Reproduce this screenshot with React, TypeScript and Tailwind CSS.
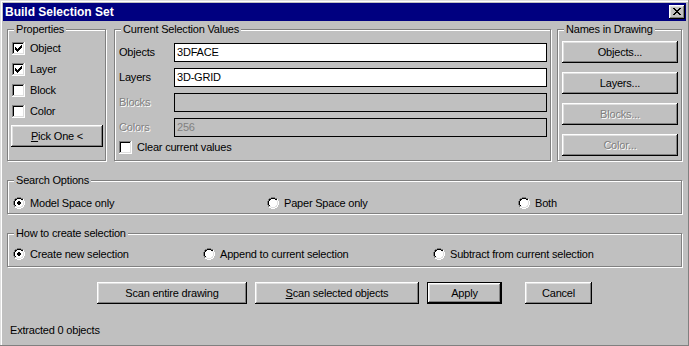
import type { ReactNode } from 'react';

// classic win95 dialog look
const font = "font-['Liberation_Sans',Arial,sans-serif]";
const raised =
  'shadow-[inset_-1px_-1px_0_#000,inset_1px_1px_0_#fff,inset_-2px_-2px_0_#808080,inset_2px_2px_0_#dfdfdf]';
const dim = 'text-[#808080] [text-shadow:1px_1px_0_#fff]';

const closeGlyph = ['##....##', '.##..##.', '..####..', '...##...', '..####..', '.##..##.', '##....##'];
const checkMark = ['......#', '.....##', '#...###', '##.###.', '#####..', '.###...', '..#....'];

const radioBase = [
  '....GGGG....',
  '..GGKKKKGG..',
  '.GKKwwwwKKW.',
  '.GKwwwwwwLW.',
  'GKwwwwwwwwLW',
  'GKwwwwwwwwLW',
  'GKwwwwwwwwLW',
  'GKwwwwwwwwLW',
  '.GKwwwwwwLW.',
  '.GLLwwwwLLW.',
  '..WWLLLLWW..',
  '....WWWW....',
];
const dot = ['.##.', '####', '####', '.##.'];

const palette: Record<string, string> = {
  G: '#808080',
  K: '#000000',
  L: '#dfdfdf',
  W: '#ffffff',
  w: '#ffffff',
  '#': '#000000',
};

function Pixels({ rows }: { rows: string[] }) {
  const w = rows[0].length;
  const h = rows.length;
  return (
    <svg width={w} height={h} viewBox={`0 0 ${w} ${h}`} shapeRendering="crispEdges" className="block shrink-0">
      {rows.flatMap((row, y) =>
        row.split('').map((c, x) =>
          palette[c] ? <rect key={`${x}-${y}`} x={x} y={y} width={1} height={1} fill={palette[c]} /> : null
        )
      )}
    </svg>
  );
}

function CheckBox({ checked }: { checked?: boolean }) {
  const rows: string[] = [];
  for (let y = 0; y < 13; y++) {
    let r = '';
    for (let x = 0; x < 13; x++) {
      let c = 'w';
      if (y === 12 || x === 12) c = 'W';
      else if (y === 0 || x === 0) c = 'G';
      else if (y === 11 || x === 11) c = 'L';
      else if (y === 1 || x === 1) c = 'K';
      else if (checked && y >= 3 && y <= 9 && x >= 3 && x <= 9 && checkMark[y - 3][x - 3] === '#') c = 'K';
      r += c;
    }
    rows.push(r);
  }
  return <Pixels rows={rows} />;
}

function Radio({ checked }: { checked?: boolean }) {
  const rows = radioBase.map((row, y) =>
    row
      .split('')
      .map((c, x) => (checked && y >= 4 && y <= 7 && x >= 4 && x <= 7 && dot[y - 4][x - 4] === '#' ? 'K' : c))
      .join('')
  );
  return <Pixels rows={rows} />;
}

function Group({ title, className, children }: { title: string; className: string; children: ReactNode }) {
  return (
    <div className={`relative shrink-0 border border-[#808080] shadow-[inset_1px_1px_0_#fff,1px_1px_0_#fff] ${className}`}>
      <span className="absolute left-[6px] top-[-7px] bg-[#c0c0c0] px-[2px] leading-[13px] whitespace-nowrap">
        {title}
      </span>
      {children}
    </div>
  );
}

function Btn({ className, children, disabled }: { className: string; children: ReactNode; disabled?: boolean }) {
  return (
    <div
      className={`flex items-center justify-center bg-[#c0c0c0] whitespace-nowrap ${raised} ${disabled ? dim : ''} ${className}`}
    >
      {children}
    </div>
  );
}

function Field({ value, disabled }: { value: string; disabled?: boolean }) {
  return (
    <div
      className={`h-[19px] w-[373px] border border-black flex items-center pl-[2px] ${
        disabled ? 'bg-[#c0c0c0] text-[#808080]' : 'bg-white'
      }`}
    >
      {value}
    </div>
  );
}

export default function App() {
  const props: [string, boolean][] = [
    ['Object', true],
    ['Layer', true],
    ['Block', false],
    ['Color', false],
  ];
  const fields: [string, string, boolean][] = [
    ['Objects', '3DFACE', false],
    ['Layers', '3D-GRID', false],
    ['Blocks', '', true],
    ['Colors', '256', true],
  ];

  return (
    <div
      className={`${font} text-[11px] leading-[13px] tracking-[-0.2px] text-black w-[689px] h-[346px] bg-[#c0c0c0] p-[3px] flex flex-col shadow-[inset_-1px_-1px_0_#808080,inset_1px_1px_0_#dfdfdf,inset_2px_2px_0_#fff]`}
    >
      {/* title bar */}
      <div className="h-[18px] shrink-0 bg-[#000080] flex items-center justify-between pl-[2px] pr-[1px]">
        <span className="text-white font-bold text-[12px] tracking-normal">Build Selection Set</span>
        <div className={`w-[16px] h-[14px] bg-[#c0c0c0] ${raised} pl-[4px] pt-[3px]`}>
          <Pixels rows={closeGlyph} />
        </div>
      </div>

      <div className="flex-1 px-[4px] flex flex-col">
        <div className="mt-[8px] flex h-[132px] shrink-0">
          <Group title="Properties" className="w-[99px] pl-[3px] pt-[12px]">
            <div className="flex flex-col gap-[8px] ml-[1px]">
              {props.map(([label, on]) => (
                <div key={label} className="flex items-center h-[13px] gap-[5px]">
                  <CheckBox checked={on} />
                  <span>{label}</span>
                </div>
              ))}
            </div>
            <Btn className="mt-[7px] w-[92px] h-[22px]">
              <span>
                <u>P</u>ick One &lt;
              </span>
            </Btn>
          </Group>

          <Group title="Current Selection Values" className="ml-[8px] w-[437px] pl-[4px] pt-[13px]">
            <div className="flex flex-col gap-[6px]">
              {fields.map(([label, value, off]) => (
                <div key={label} className="flex items-center h-[19px]">
                  <span className={`w-[55px] ${off ? dim : ''}`}>{label}</span>
                  <Field value={value} disabled={off} />
                </div>
              ))}
            </div>
            <div className="mt-[4px] flex items-center h-[13px] gap-[5px]">
              <CheckBox />
              <span>Clear current values</span>
            </div>
          </Group>

          <Group title="Names in Drawing" className="ml-[6px] w-[125px] pl-[4px] pt-[11px]">
            <div className="flex flex-col gap-[9px]">
              <Btn className="w-[116px] h-[22px]">Objects...</Btn>
              <Btn className="w-[116px] h-[22px]">Layers...</Btn>
              <Btn className="w-[116px] h-[22px]" disabled>
                Blocks...
              </Btn>
              <Btn className="w-[116px] h-[22px]" disabled>
                Color...
              </Btn>
            </div>
          </Group>
        </div>

        <Group title="Search Options" className="mt-[19px] h-[34px] pl-[5px] pt-[16px]">
          <div className="flex h-[12px]">
            <div className="w-[254px] flex items-center gap-[5px]">
              <Radio checked />
              <span>Model Space only</span>
            </div>
            <div className="w-[251px] flex items-center gap-[5px]">
              <Radio />
              <span>Paper Space only</span>
            </div>
            <div className="flex items-center gap-[5px]">
              <Radio />
              <span>Both</span>
            </div>
          </div>
        </Group>

        <Group title="How to create selection" className="mt-[19px] h-[34px] pl-[5px] pt-[14px]">
          <div className="flex h-[12px]">
            <div className="w-[190px] flex items-center gap-[5px]">
              <Radio checked />
              <span>Create new selection</span>
            </div>
            <div className="w-[230px] flex items-center gap-[5px]">
              <Radio />
              <span>Append to current selection</span>
            </div>
            <div className="flex items-center gap-[5px]">
              <Radio />
              <span>Subtract from current selection</span>
            </div>
          </div>
        </Group>

        <div className="mt-[15px] flex justify-center">
          <Btn className="w-[150px] h-[22px]">Scan entire drawing</Btn>
          <Btn className="ml-[8px] w-[164px] h-[22px]">
            <span>
              <u>S</u>can selected objects
            </span>
          </Btn>
          <Btn className="ml-[8px] w-[75px] h-[22px] border border-black">Apply</Btn>
          <Btn className="ml-[23px] w-[67px] h-[22px]">Cancel</Btn>
        </div>

        <div className="mt-[20px] ml-[3px]">Extracted 0 objects</div>
      </div>
    </div>
  );
}
